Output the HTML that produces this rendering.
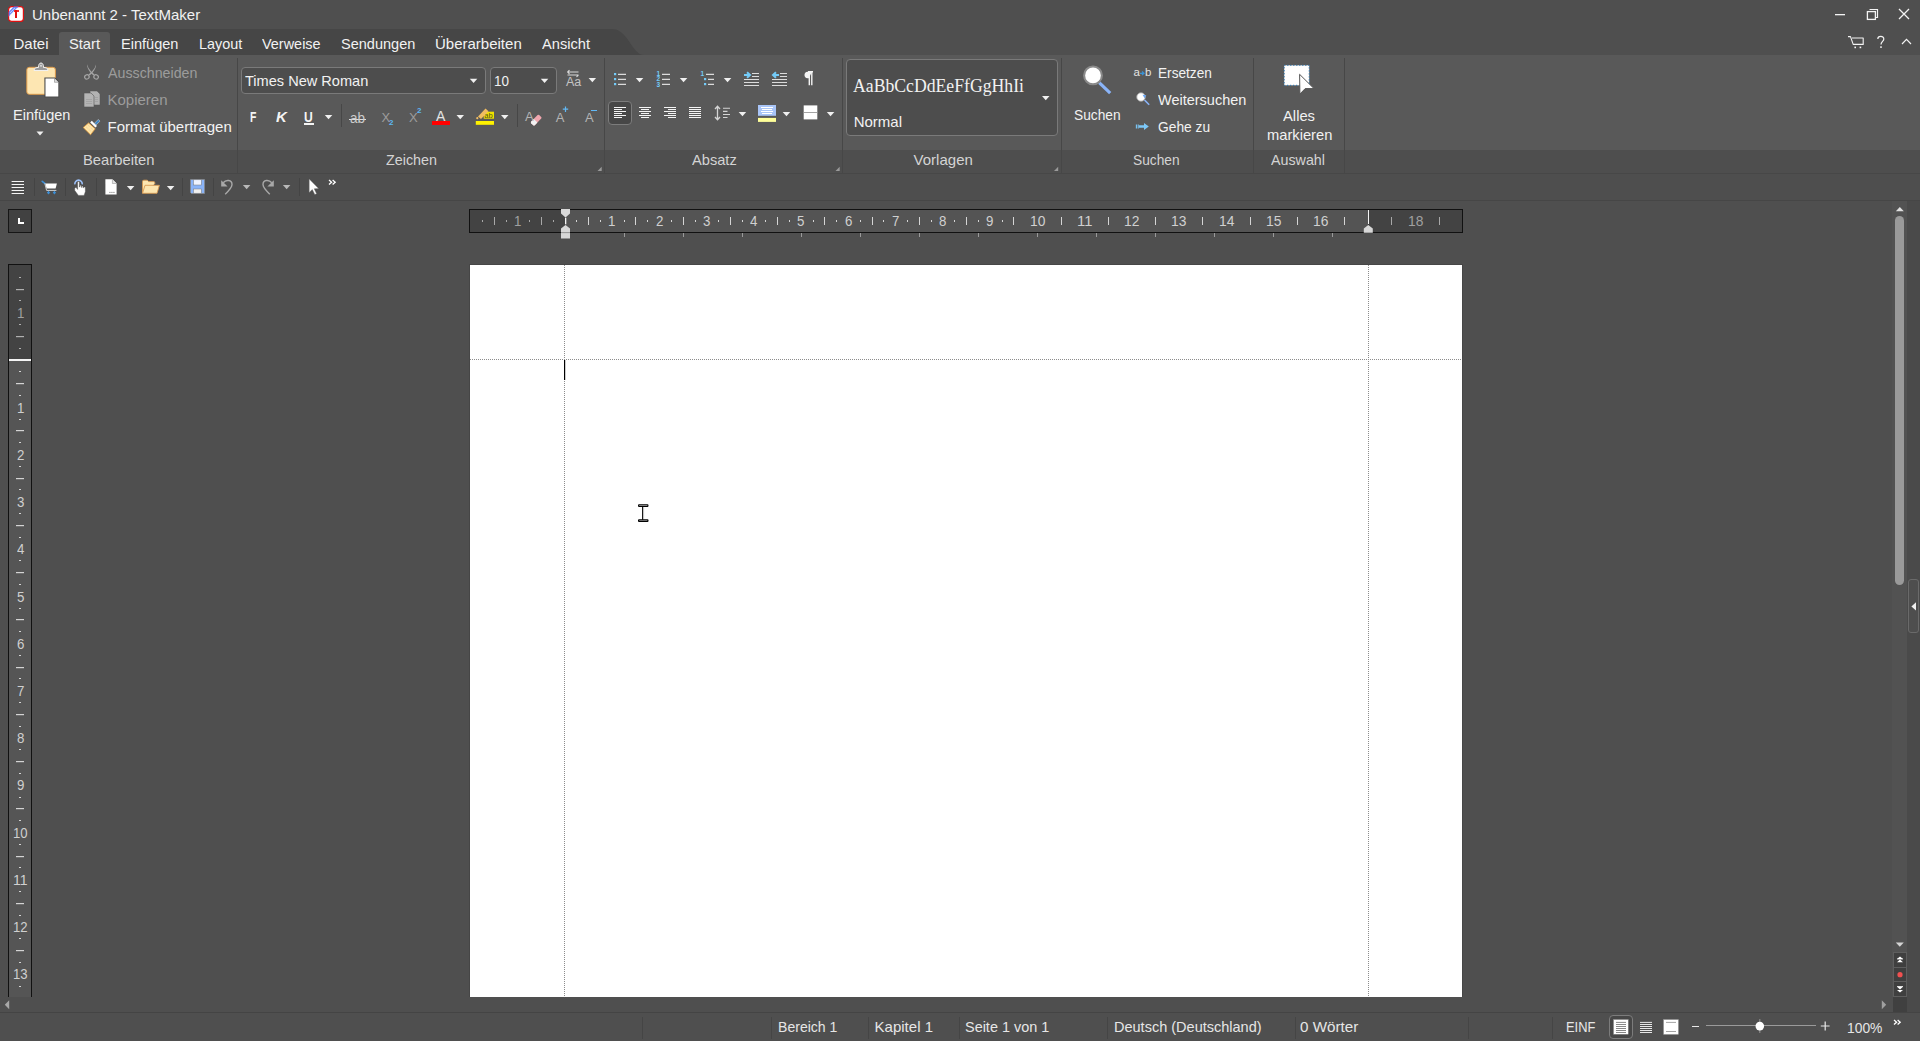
<!DOCTYPE html>
<html><head><meta charset="utf-8"><style>
html,body{margin:0;padding:0;width:1920px;height:1041px;overflow:hidden;background:#4f4f4f;font-family:'Liberation Sans',sans-serif;}
svg{display:block;overflow:visible}
</style></head><body>
<div style="position:absolute;left:0px;top:0px;width:1920px;height:29px;background:#4f4f4f;"></div>
<div style="position:absolute;left:0px;top:29px;width:1920px;height:26px;background:#4f4f4f;"></div>
<svg style="position:absolute;left:0px;top:29px;" width="650" height="26" viewBox="0 0 650 26"><path d="M0 0 H612 C628 0 632 26 644 26 H0 Z" fill="#464646"/></svg>
<div style="position:absolute;left:59px;top:32px;width:51px;height:23px;background:#595959;border-radius:3px 3px 0 0"></div>
<div style="position:absolute;left:0px;top:55px;width:1920px;height:95px;background:#595959;"></div>
<div style="position:absolute;left:0px;top:150px;width:1920px;height:23px;background:#4e4e4e;"></div>
<div style="position:absolute;left:0px;top:173px;width:1920px;height:1px;background:#474747;"></div>
<div style="position:absolute;left:0px;top:174px;width:1920px;height:26px;background:#4e4e4e;"></div>
<div style="position:absolute;left:0px;top:200px;width:1920px;height:1px;background:#464646;"></div>
<div style="position:absolute;left:0px;top:201px;width:1920px;height:811px;background:#4f4f4f;"></div>
<div style="position:absolute;left:237px;top:58px;width:1px;height:115px;background:#474747;"></div>
<div style="position:absolute;left:604px;top:58px;width:1px;height:115px;background:#474747;"></div>
<div style="position:absolute;left:842px;top:58px;width:1px;height:115px;background:#474747;"></div>
<div style="position:absolute;left:1061px;top:58px;width:1px;height:115px;background:#474747;"></div>
<div style="position:absolute;left:1253px;top:58px;width:1px;height:115px;background:#474747;"></div>
<div style="position:absolute;left:1344px;top:58px;width:1px;height:115px;background:#474747;"></div>
<div style="position:absolute;left:0px;top:1012px;width:1920px;height:1px;background:#444444;"></div>
<div style="position:absolute;left:0px;top:1013px;width:1920px;height:28px;background:#4f4f4f;"></div>
<div style="position:absolute;left:642px;top:1017px;width:1px;height:22px;background:#454545;"></div>
<div style="position:absolute;left:771px;top:1017px;width:1px;height:22px;background:#454545;"></div>
<div style="position:absolute;left:868px;top:1017px;width:1px;height:22px;background:#454545;"></div>
<div style="position:absolute;left:959px;top:1017px;width:1px;height:22px;background:#454545;"></div>
<div style="position:absolute;left:1107px;top:1017px;width:1px;height:22px;background:#454545;"></div>
<div style="position:absolute;left:1295px;top:1017px;width:1px;height:22px;background:#454545;"></div>
<div style="position:absolute;left:1468px;top:1017px;width:1px;height:22px;background:#454545;"></div>
<div style="position:absolute;left:1552px;top:1017px;width:1px;height:22px;background:#454545;"></div>
<div style="position:absolute;left:469px;top:264px;width:994px;height:733px;background:#464646;"></div>
<div style="position:absolute;left:470px;top:265px;width:992px;height:732px;background:#ffffff;"></div>
<svg style="position:absolute;left:8px;top:6px;" width="16" height="16" viewBox="0 0 16 16"><rect x="0.6" y="0.6" width="14.8" height="14.8" rx="3" fill="#fff" stroke="#e01010" stroke-width="1.2"/>
<path d="M5.9 0.6 L10.7 0.6 L0.6 10.7 L0.6 5.9 Z" fill="#5b7cf8"/>
<path d="M6.5 1.8 L7.5 1.8 L1.8 7.5 L1.8 6.5 Z M8.8 1.8 L9.4 1.8 L1.8 9.4 L1.8 8.8Z" fill="#dfe6ff"/>
<rect x="6" y="4" width="5" height="2" fill="#f03030"/><rect x="7" y="4" width="2" height="8" fill="#e01010"/></svg>
<svg style="position:absolute;left:1834px;top:8px;" width="80" height="12" viewBox="0 0 80 12"><rect x="1" y="6" width="10" height="1.3" fill="#f4f4f4"/>
<path d="M35.5 1.5 H43.5 V9.5 H41.5" fill="none" stroke="#f4f4f4" stroke-width="1.2"/>
<rect x="33.4" y="3.6" width="8" height="7.8" fill="none" stroke="#f4f4f4" stroke-width="1.3"/>
<path d="M65 1 L75 11 M75 1 L65 11" stroke="#f4f4f4" stroke-width="1.3"/></svg>
<svg style="position:absolute;left:1846px;top:34px;" width="68" height="16" viewBox="0 0 68 16"><path d="M2 2.6 H4.5 L7.2 10.4 H17.2 V4 H6" fill="none" stroke="#f4f4f4" stroke-width="1.1" stroke-linejoin="round"/>
<rect x="8.4" y="12.6" width="1.6" height="1.6" fill="#f4f4f4"/><rect x="13.6" y="12.6" width="1.6" height="1.6" fill="#f4f4f4"/>
<path d="M31.8 5 C31.8 1.5 37.8 1.4 37.8 5 C37.8 7.4 35 7.4 35 10.6" fill="none" stroke="#f4f4f4" stroke-width="1.2"/>
<rect x="34.2" y="12.3" width="1.6" height="1.6" fill="#f4f4f4"/>
<path d="M56 10 L60.5 5.3 L65 10" fill="none" stroke="#f4f4f4" stroke-width="1.2"/></svg>
<svg style="position:absolute;left:20px;top:58px;" width="44" height="44" viewBox="0 0 44 44"><rect x="6.8" y="9.3" width="28.6" height="27" rx="2.5" fill="#fde6b2" stroke="#dd9a4a" stroke-width="1"/>
<path d="M14 12.5 Q14 9.5 17 9.5 H18.5 Q18.5 5 21 5 Q23.5 5 23.5 9.5 H25 Q28 9.5 28 12.5 Z" fill="#9a9a9a" stroke="#f0f0f0" stroke-width="1"/>
<circle cx="21" cy="7.8" r="0.9" fill="#e8e8e8"/>
<path d="M24.4 19.4 H35.2 L39.2 23.4 V39.4 H24.4 Z" fill="#4c4c4c"/>
<path d="M25.5 20.5 H34.5 L38.3 24.3 V38.5 H25.5 Z" fill="#ffffff"/>
<path d="M34.5 20.5 V24.3 H38.3" fill="#dcdcdc" stroke="#8a8a8a" stroke-width="0.6"/></svg>
<svg style="position:absolute;left:80px;top:60px;" width="24" height="24" viewBox="0 0 24 24"><path d="M7.2 4.2 Q7.6 7.6 11.2 11.4 L14.6 14.6 L13.4 15.6 L10.4 12.4 Q6.8 8.2 7.2 4.2 Z" fill="#a4a4a4"/>
<path d="M15.9 4.5 Q15.5 7.8 11.9 11.4 L8.5 14.6 L9.7 15.6 L12.7 12.4 Q16.3 8.3 15.9 4.5 Z" fill="#a4a4a4"/>
<ellipse cx="6.9" cy="16.9" rx="2.3" ry="2.1" fill="none" stroke="#a4a4a4" stroke-width="1.2" transform="rotate(-35 6.9 16.9)"/>
<ellipse cx="16.1" cy="16.9" rx="2.3" ry="2.1" fill="none" stroke="#a4a4a4" stroke-width="1.2" transform="rotate(35 16.1 16.9)"/></svg>
<svg style="position:absolute;left:80px;top:88px;" width="24" height="24" viewBox="0 0 24 24"><path d="M10 3 H17 L20 6 V17 H10 Z" fill="#b2b2b2" stroke="#555" stroke-width="0.5"/>
<path d="M4 5 H11 L14 8 V19 H4 Z" fill="#b4b4b4" stroke="#555" stroke-width="0.6"/>
<path d="M6 11.5 H12 M6 13.5 H12 M6 15.5 H12 M14.5 9.5 H18 M14.5 11.5 H18 M14.5 13.5 H18" stroke="#999" stroke-width="0.6"/></svg>
<svg style="position:absolute;left:80px;top:114px;" width="24" height="24" viewBox="0 0 24 24"><path d="M14.5 9.2 L18.3 5.4 L20 7.1 L16.2 10.9 Z" fill="#3f86c6" stroke="#d8d8d8" stroke-width="0.5"/>
<path d="M10.2 8.4 L11.8 6.8 L17 12 L15.4 13.6 Z" fill="#ffffff"/>
<path d="M3.2 13.5 L8.6 8.9 L15.2 14.8 L10.5 20.8 Z" fill="#fde4a8" stroke="#e29a3c" stroke-width="0.8" stroke-linejoin="round"/>
<path d="M6 12.8 L11.5 17.8 M8 11.2 L13.3 16" stroke="#e8b872" stroke-width="0.5" stroke-dasharray="1 1"/></svg>
<svg style="position:absolute;left:36px;top:131px;" width="9" height="5" viewBox="0 0 9 5"><path d="M0.5 0.5 H7.5 L4 4.5 Z" fill="#f0f0f0"/></svg>
<div style="position:absolute;left:241px;top:67px;width:245px;height:27px;background:#4d4d4d;border:1px solid #7a7a7a;border-radius:4px;box-sizing:border-box"></div>
<div style="position:absolute;left:490px;top:67px;width:67px;height:27px;background:#4d4d4d;border:1px solid #7a7a7a;border-radius:4px;box-sizing:border-box"></div>
<svg style="position:absolute;left:469px;top:78px;" width="9" height="6" viewBox="0 0 9 6"><path d="M0.80 0.80 h7.5 l-3.75 4.3 Z" fill="#f0f0f0"/></svg>
<svg style="position:absolute;left:540px;top:78px;" width="9" height="6" viewBox="0 0 9 6"><path d="M0.80 0.80 h7.5 l-3.75 4.3 Z" fill="#f0f0f0"/></svg>
<svg style="position:absolute;left:564px;top:69px;" width="18" height="19" viewBox="0 0 18 19"><path d="M3.5 3 H14.5 M3.5 3 L5.5 1.2 M3.5 3 L5.5 4.8 M3.5 6 H14.5 M14.5 6 L12.5 7.8" fill="none" stroke="#d8d8d8" stroke-width="1.1"/>
<text x="2" y="17.4" font-family="Liberation Sans" font-size="12.5" fill="#c4c4c4">Aa</text></svg>
<svg style="position:absolute;left:588px;top:78px;" width="9" height="6" viewBox="0 0 9 6"><path d="M0.60 0.00 h7.5 l-3.75 4.3 Z" fill="#f0f0f0"/></svg>
<div style="position:absolute;left:304px;top:123px;width:10px;height:1.6px;background:#f4f4f4;"></div>
<svg style="position:absolute;left:324px;top:115px;" width="9" height="6" viewBox="0 0 9 6"><path d="M0.80 0.00 h7.5 l-3.75 4.3 Z" fill="#f0f0f0"/></svg>
<div style="position:absolute;left:341px;top:104px;width:1px;height:23px;background:#474747;"></div>
<div style="position:absolute;left:348.5px;top:119px;width:17px;height:1.2px;background:#dedede;"></div>
<div style="position:absolute;left:431.7px;top:121px;width:18.3px;height:3.8px;background:#ff0000;"></div>
<svg style="position:absolute;left:456px;top:115px;" width="9" height="6" viewBox="0 0 9 6"><path d="M0.50 0.00 h7.5 l-3.75 4.3 Z" fill="#f0f0f0"/></svg>
<svg style="position:absolute;left:474px;top:106px;" width="22" height="20" viewBox="0 0 22 20"><rect x="1.8" y="15" width="18.2" height="3.8" fill="#fff200"/>
<rect x="9.7" y="5.7" width="10.3" height="7" fill="#f0e000"/>
<text x="10.3" y="11.8" font-family="Liberation Sans" font-size="7.5" fill="#505020">ab</text>
<path d="M4 10.5 L11.5 2.5 L14.5 5.2 L7 13 Z" fill="#f0bc60"/>
<circle cx="3.3" cy="12.2" r="1.1" fill="#f0bc60"/></svg>
<svg style="position:absolute;left:501px;top:115px;" width="9" height="6" viewBox="0 0 9 6"><path d="M0.00 0.00 h7.5 l-3.75 4.3 Z" fill="#f0f0f0"/></svg>
<div style="position:absolute;left:517px;top:104px;width:1px;height:23px;background:#474747;"></div>
<svg style="position:absolute;left:529px;top:112px;" width="14" height="14" viewBox="0 0 14 14"><path d="M2.2 9.6 L8.6 3 Q9.4 2.3 10.2 3 L12.2 5 Q12.9 5.8 12.2 6.6 L5.8 13.2 Q5 13.9 4.2 13.2 L2.2 11.2 Q1.5 10.4 2.2 9.6 Z" fill="#f0a6ae"/><path d="M2.2 9.6 L4.8 6.9 L8.4 10.5 L5.8 13.2 Q5 13.9 4.2 13.2 L2.2 11.2 Q1.5 10.4 2.2 9.6 Z" fill="#f2f2f2"/></svg>
<svg style="position:absolute;left:562px;top:106px;" width="8" height="7" viewBox="0 0 8 7"><path d="M3.5 0.5 V6 M0.8 3.2 H6.2" stroke="#62b8f4" stroke-width="1.2"/></svg>
<div style="position:absolute;left:591px;top:110px;width:6px;height:1.2px;background:#62b8f4;"></div>
<svg style="position:absolute;left:612px;top:70px;" width="20" height="18" viewBox="0 0 20 18"><rect x="2" y="3" width="2.2" height="2.2" fill="#74cbf8"/><rect x="2" y="8" width="2.2" height="2.2" fill="#74cbf8"/><rect x="2" y="13" width="2.2" height="2.2" fill="#74cbf8"/>
<path d="M6 4.4 H14 M6 9.4 H14 M6 14.4 H14" stroke="#dcdcdc" stroke-width="1.1"/></svg>
<svg style="position:absolute;left:635px;top:77px;" width="9" height="6" viewBox="0 0 9 6"><path d="M0.80 0.90 h7.5 l-3.75 4.3 Z" fill="#f0f0f0"/></svg>
<svg style="position:absolute;left:655px;top:69px;" width="20" height="20" viewBox="0 0 20 20"><text x="1.5" y="7" font-family="Liberation Sans" font-weight="bold" font-size="6.5" fill="#74cbf8">1</text>
<text x="1.5" y="12" font-family="Liberation Sans" font-weight="bold" font-size="6.5" fill="#74cbf8">2</text>
<text x="1.5" y="17.5" font-family="Liberation Sans" font-weight="bold" font-size="6.5" fill="#74cbf8">3</text>
<path d="M7 5.4 H15 M7 10.4 H15 M7 15.4 H15" stroke="#dcdcdc" stroke-width="1.1"/></svg>
<svg style="position:absolute;left:679px;top:77px;" width="9" height="6" viewBox="0 0 9 6"><path d="M0.80 0.90 h7.5 l-3.75 4.3 Z" fill="#f0f0f0"/></svg>
<svg style="position:absolute;left:699px;top:69px;" width="20" height="20" viewBox="0 0 20 20"><text x="1.5" y="7" font-family="Liberation Sans" font-weight="bold" font-size="6.5" fill="#74cbf8">1</text>
<rect x="5" y="9" width="2.2" height="2.2" fill="#74cbf8"/><rect x="5" y="14" width="2.2" height="2.2" fill="#74cbf8"/>
<path d="M7 5.4 H15 M9 10.4 H15 M9 15.4 H15" stroke="#dcdcdc" stroke-width="1.1"/></svg>
<svg style="position:absolute;left:723px;top:77px;" width="9" height="6" viewBox="0 0 9 6"><path d="M0.80 0.90 h7.5 l-3.75 4.3 Z" fill="#f0f0f0"/></svg>
<svg style="position:absolute;left:742px;top:70px;" width="20" height="18" viewBox="0 0 20 18"><path d="M2 5 H6.5 M5 2.2 L8 5 L5 7.8" fill="none" stroke="#74cbf8" stroke-width="2" stroke-linejoin="miter"/>
<path d="M10 3.5 H17 M10 6.5 H17 M2 9.5 H17 M2 12.5 H17 M2 15.5 H17" stroke="#dcdcdc" stroke-width="1.1"/></svg>
<svg style="position:absolute;left:770px;top:70px;" width="20" height="18" viewBox="0 0 20 18"><path d="M9 5 H4.5 M6 2.2 L3 5 L6 7.8" fill="none" stroke="#74cbf8" stroke-width="2"/>
<path d="M10 3.5 H17 M10 6.5 H17 M2 9.5 H17 M2 12.5 H17 M2 15.5 H17" stroke="#dcdcdc" stroke-width="1.1"/></svg>
<svg style="position:absolute;left:802px;top:70px;" width="14" height="17" viewBox="0 0 14 17"><path d="M10 1.8 H5.5 C1.5 1.8 1.5 8.3 5.5 8.3 H6.8" fill="#f4f4f4"/>
<path d="M7.3 1.8 V15.2 M9.8 1.8 V15.2 M6 1.8 H11" stroke="#f4f4f4" stroke-width="1.4"/></svg>
<div style="position:absolute;left:608px;top:101px;width:24px;height:24px;background:#474747;border:1px solid #7c7c7c;border-radius:4px;box-sizing:border-box"></div>
<svg style="position:absolute;left:614px;top:105px;" width="14" height="16" viewBox="0 0 14 16"><path d="M0 2.5 H12 M0 4.5 H8 M0 6.5 H12 M0 8.5 H8 M0 10.5 H12 M0 12.5 H8 " stroke="#f4f4f4" stroke-width="1.15"/></svg>
<svg style="position:absolute;left:639px;top:105px;" width="14" height="16" viewBox="0 0 14 16"><path d="M0 2.5 H12 M2 4.5 H10 M0 6.5 H12 M2 8.5 H10 M0 10.5 H12 M2 12.5 H10 " stroke="#f4f4f4" stroke-width="1.15"/></svg>
<svg style="position:absolute;left:664px;top:105px;" width="14" height="16" viewBox="0 0 14 16"><path d="M0 2.5 H12 M4 4.5 H12 M0 6.5 H12 M4 8.5 H12 M0 10.5 H12 M4 12.5 H12 " stroke="#f4f4f4" stroke-width="1.15"/></svg>
<svg style="position:absolute;left:689px;top:105px;" width="14" height="16" viewBox="0 0 14 16"><path d="M0 2.5 H12 M0 4.5 H12 M0 6.5 H12 M0 8.5 H12 M0 10.5 H12 M0 12.5 H12 " stroke="#f4f4f4" stroke-width="1.15"/></svg>
<svg style="position:absolute;left:713px;top:104px;" width="20" height="18" viewBox="0 0 20 18"><path d="M4.5 2.5 V15.5 M2 5 L4.5 2.2 L7 5 M2 13 L4.5 15.8 L7 13" fill="none" stroke="#d4d4d4" stroke-width="1.3"/>
<path d="M10 4.3 H17 M10 7.4 H14.5 M10 10.5 H17 M10 13.5 H14.5" stroke="#d4d4d4" stroke-width="1.1"/></svg>
<svg style="position:absolute;left:738px;top:112px;" width="9" height="6" viewBox="0 0 9 6"><path d="M0.70 0.00 h7.5 l-3.75 4.3 Z" fill="#f0f0f0"/></svg>
<svg style="position:absolute;left:757px;top:104px;" width="21" height="19" viewBox="0 0 21 19"><rect x="1" y="1" width="18" height="10.8" fill="#a9c5f8"/>
<path d="M4 3.5 H16 M5 5.5 H15 M4 7.5 H16 M5 9.5 H15" stroke="#ffffff" stroke-width="1"/>
<rect x="1" y="13.9" width="18" height="4" fill="#ffff99"/></svg>
<svg style="position:absolute;left:782px;top:112px;" width="9" height="6" viewBox="0 0 9 6"><path d="M0.70 0.00 h7.5 l-3.75 4.3 Z" fill="#f0f0f0"/></svg>
<svg style="position:absolute;left:803px;top:105px;" width="15" height="15" viewBox="0 0 15 15"><rect x="0.7" y="0.4" width="13.6" height="14" fill="#ffffff"/><rect x="0.7" y="7" width="13.6" height="0.9" fill="#9a9a9a"/></svg>
<svg style="position:absolute;left:826px;top:112px;" width="9" height="6" viewBox="0 0 9 6"><path d="M0.80 0.00 h7.5 l-3.75 4.3 Z" fill="#f0f0f0"/></svg>
<svg style="position:absolute;left:597px;top:166px;" width="6" height="6" viewBox="0 0 6 6"><path d="M0.5 5 L4.7 0.8 V5 Z" fill="#9a9a9a"/></svg>
<svg style="position:absolute;left:835px;top:166px;" width="6" height="6" viewBox="0 0 6 6"><path d="M0.5 5 L4.7 0.8 V5 Z" fill="#9a9a9a"/></svg>
<svg style="position:absolute;left:1054px;top:166px;" width="6" height="6" viewBox="0 0 6 6"><path d="M0.0 5 L4.2 0.8 V5 Z" fill="#9a9a9a"/></svg>
<div style="position:absolute;left:846px;top:59px;width:212px;height:77px;background:#4d4d4d;border:1px solid #7a7a7a;border-radius:4px;box-sizing:border-box"></div>
<svg style="position:absolute;left:1042px;top:96px;" width="9" height="6" viewBox="0 0 9 6"><path d="M0.00 0.00 h7.5 l-3.75 4.3 Z" fill="#f0f0f0"/></svg>
<svg style="position:absolute;left:1080px;top:62px;" width="34" height="34" viewBox="0 0 34 34"><path d="M19.2 20.6 L30.2 31.2" stroke="#8ab4f8" stroke-width="3.2" stroke-linecap="butt"/>
<circle cx="13" cy="13.4" r="8.9" fill="#ffffff" stroke="#8a8a8a" stroke-width="2.1"/></svg>
<svg style="position:absolute;left:1132px;top:64px;" width="22" height="14" viewBox="0 0 22 14"><text x="1.5" y="12" font-family="Liberation Sans" font-size="11.5" fill="#e4e4e4">a</text>
<text x="13" y="12" font-family="Liberation Sans" font-size="11.5" fill="#e4e4e4">b</text>
<path d="M8 9.3 H11.5 M10 7.5 L12 9.3 L10 11.1" fill="none" stroke="#3a92d4" stroke-width="1.3"/></svg>
<svg style="position:absolute;left:1134px;top:90px;" width="18" height="18" viewBox="0 0 18 18"><path d="M10.5 10 L15.2 14.8" stroke="#8ab4f8" stroke-width="1.6"/>
<circle cx="7" cy="7" r="4.3" fill="#ffffff" stroke="#9a9a9a" stroke-width="0.9"/>
<path d="M8.5 4.7 L12.3 5.3 L10.6 8.2 Z" fill="#6aa6f4"/></svg>
<svg style="position:absolute;left:1134px;top:120px;" width="18" height="13" viewBox="0 0 18 13"><path d="M2.4 4.6 V8.4 M4.2 4.6 V8.4" stroke="#7cc8f8" stroke-width="1.1"/>
<path d="M5 5.3 H10 V3 L14.8 6.5 L10 10 V7.7 H5 Z" fill="#7cc8f8"/></svg>
<svg style="position:absolute;left:1280px;top:62px;" width="38" height="36" viewBox="0 0 38 36"><rect x="4.2" y="3.3" width="25" height="20" fill="#ffffff" stroke="#2a78b6" stroke-width="1" stroke-dasharray="1.2 1.8"/>
<path d="M19.6 12.3 L19.9 32 L25.2 26.6 L34 26.6 Z" fill="#ffffff" stroke="#555555" stroke-width="1" stroke-linejoin="miter"/></svg>
<svg style="position:absolute;left:10px;top:180px;" width="16" height="16" viewBox="0 0 16 16"><path d="M1.6 1.5 H14 M1.6 4.5 H14 M1.6 7.5 H14 M1.6 10.5 H14 M1.6 13.5 H14" stroke="#f4f4f4" stroke-width="1.2"/></svg>
<div style="position:absolute;left:34px;top:178px;width:1px;height:18px;background:#444444;"></div>
<div style="position:absolute;left:65px;top:178px;width:1px;height:18px;background:#444444;"></div>
<div style="position:absolute;left:96px;top:178px;width:1px;height:18px;background:#444444;"></div>
<div style="position:absolute;left:182px;top:178px;width:1px;height:18px;background:#444444;"></div>
<div style="position:absolute;left:213px;top:178px;width:1px;height:18px;background:#444444;"></div>
<div style="position:absolute;left:299px;top:178px;width:1px;height:18px;background:#444444;"></div>
<svg style="position:absolute;left:40px;top:179px;" width="20" height="17" viewBox="0 0 20 17"><path d="M2.2 2.3 L4.8 4.4" stroke="#3d8fd6" stroke-width="1.6" stroke-linecap="round"/>
<path d="M5.2 4.6 H16.9 L15.6 9.6 H6.6 Z" fill="#ffffff"/>
<path d="M4.8 4.4 L6.6 11.4 H16.4" fill="none" stroke="#dcdcdc" stroke-width="0.9"/>
<path d="M8.5 12 V14.2 M7.2 13.2 L8.5 14.6 L9.8 13.2 M14.4 12 V14.2 M13.1 13.2 L14.4 14.6 L15.7 13.2" fill="none" stroke="#3d8fd6" stroke-width="1.1"/></svg>
<svg style="position:absolute;left:72px;top:177px;" width="16" height="20" viewBox="0 0 16 20"><path d="M2.9 7.4 A3.7 3.7 0 1 1 10.2 7.4" fill="none" stroke="#9cc0f8" stroke-width="1.6"/>
<path d="M5.6 4.8 Q6.5 4.2 7.4 4.8 V10 H7.9 V8.4 Q8.6 7.9 9.3 8.4 V10.4 H9.6 V9.2 Q10.3 8.7 11 9.2 V10.8 H11.3 V10.2 Q12.3 9.6 13.3 10.2 L13.4 14.6 L12.1 18.4 H6.4 L2.7 13.4 V11.2 Q3.4 10.2 4.2 10.6 L5.6 12.4 Z" fill="#ffffff" stroke="#4a4a4a" stroke-width="0.45"/></svg>
<svg style="position:absolute;left:104px;top:178px;" width="14" height="18" viewBox="0 0 14 18"><path d="M1.4 1.3 H8.4 L12.6 5.5 V16.6 H1.4 Z" fill="#ffffff"/>
<path d="M8.4 1.3 V5.5 H12.6" fill="#e4e4e4" stroke="#888" stroke-width="0.5"/>
<path d="M5.5 14.4 H6.4 M7.5 14.4 H8.4 M9.5 14.4 H10.4" stroke="#555" stroke-width="1"/></svg>
<svg style="position:absolute;left:126px;top:185px;" width="9" height="6" viewBox="0 0 9 6"><path d="M0.90 0.90 h7.5 l-3.75 4.3 Z" fill="#f0f0f0"/></svg>
<svg style="position:absolute;left:141px;top:179px;" width="20" height="16" viewBox="0 0 20 16"><path d="M1.5 14.2 V2.6 Q1.5 1.2 2.9 1.2 H6.3 L7.6 2.6 H12.6 Q13.8 2.6 13.8 3.8 V5" fill="#fde6b0" stroke="#d79a52" stroke-width="0.9"/>
<path d="M1.5 14.3 L4 6.3 H18.4 L16 14.3 Z" fill="#fde6b0" stroke="#d79a52" stroke-width="0.9" stroke-linejoin="round"/></svg>
<svg style="position:absolute;left:166px;top:185px;" width="9" height="6" viewBox="0 0 9 6"><path d="M0.90 0.90 h7.5 l-3.75 4.3 Z" fill="#f0f0f0"/></svg>
<svg style="position:absolute;left:189px;top:178px;" width="17" height="17" viewBox="0 0 17 17"><path d="M1.5 1.5 H15.5 V15.5 H2.5 L1.5 14.5 Z" fill="#8ab4f8" stroke="#8a8a8a" stroke-width="0.7"/>
<rect x="4.5" y="1.8" width="7.8" height="5.2" fill="#eef3ff" stroke="#777" stroke-width="0.5"/>
<rect x="4.5" y="11" width="7.8" height="4.2" fill="#f0f0f0" stroke="#777" stroke-width="0.5"/></svg>
<svg style="position:absolute;left:219px;top:178px;" width="17" height="18" viewBox="0 0 17 18"><path d="M4.2 4.8 C7 1.4 13 1.6 13 6.6 C13 9.5 10.2 12.5 6.2 16.2" fill="none" stroke="#a8a8a8" stroke-width="1.4"/>
<path d="M2.2 2.2 V8.6 H8.6 Z" fill="#a8a8a8"/></svg>
<svg style="position:absolute;left:242px;top:185px;" width="9" height="6" viewBox="0 0 9 6"><path d="M0.90 0.00 h7.5 l-3.75 4.3 Z" fill="#b8b8b8"/></svg>
<svg style="position:absolute;left:259px;top:178px;" width="17" height="18" viewBox="0 0 17 18"><path d="M12.8 4.8 C10 1.4 4 1.6 4 6.6 C4 9.5 6.8 12.5 10.8 16.2" fill="none" stroke="#a8a8a8" stroke-width="1.4"/>
<path d="M14.8 2.2 V8.6 H8.4 Z" fill="#a8a8a8"/></svg>
<svg style="position:absolute;left:282px;top:185px;" width="9" height="6" viewBox="0 0 9 6"><path d="M0.90 0.00 h7.5 l-3.75 4.3 Z" fill="#b8b8b8"/></svg>
<svg style="position:absolute;left:307px;top:178px;" width="14" height="18" viewBox="0 0 14 18"><path d="M2.2 1 V14.4 L5.3 11.6 L7.8 16.6 L9.6 15.8 L7.2 10.8 L11.6 10.6 Z" fill="#ffffff" stroke="#6a6a6a" stroke-width="0.4"/></svg>
<svg style="position:absolute;left:328px;top:179px;" width="10" height="8" viewBox="0 0 10 8"><path d="M1 1 L3.6 3.2 L1 5.6 M4.6 1 L7.2 3.2 L4.6 5.6" fill="none" stroke="#ffffff" stroke-width="1.3"/></svg>
<div style="position:absolute;left:469px;top:209px;width:994px;height:24px;background:#434343;border:1px solid #111111;box-sizing:border-box"></div>
<div style="position:absolute;left:565px;top:210px;width:803px;height:22px;background:#545454;"></div>
<svg style="position:absolute;left:469px;top:209px;" width="994" height="24" viewBox="0 0 994 24"><rect x="13" y="11" width="1" height="2" fill="#a8a8a8"/><rect x="25" y="8" width="1" height="8" fill="#a8a8a8"/><rect x="37" y="11" width="1" height="2" fill="#a8a8a8"/><rect x="60" y="11" width="1" height="2" fill="#a8a8a8"/><rect x="72" y="8" width="1" height="8" fill="#a8a8a8"/><rect x="84" y="11" width="1" height="2" fill="#a8a8a8"/><rect x="107" y="11" width="1" height="2" fill="#d4d4d4"/><rect x="119" y="8" width="1" height="8" fill="#d4d4d4"/><rect x="131" y="11" width="1" height="2" fill="#d4d4d4"/><rect x="155" y="11" width="1" height="2" fill="#d4d4d4"/><rect x="166" y="8" width="1" height="8" fill="#d4d4d4"/><rect x="178" y="11" width="1" height="2" fill="#d4d4d4"/><rect x="202" y="11" width="1" height="2" fill="#d4d4d4"/><rect x="214" y="8" width="1" height="8" fill="#d4d4d4"/><rect x="226" y="11" width="1" height="2" fill="#d4d4d4"/><rect x="249" y="11" width="1" height="2" fill="#d4d4d4"/><rect x="261" y="8" width="1" height="8" fill="#d4d4d4"/><rect x="273" y="11" width="1" height="2" fill="#d4d4d4"/><rect x="296" y="11" width="1" height="2" fill="#d4d4d4"/><rect x="308" y="8" width="1" height="8" fill="#d4d4d4"/><rect x="320" y="11" width="1" height="2" fill="#d4d4d4"/><rect x="344" y="11" width="1" height="2" fill="#d4d4d4"/><rect x="355" y="8" width="1" height="8" fill="#d4d4d4"/><rect x="367" y="11" width="1" height="2" fill="#d4d4d4"/><rect x="391" y="11" width="1" height="2" fill="#d4d4d4"/><rect x="403" y="8" width="1" height="8" fill="#d4d4d4"/><rect x="414" y="11" width="1" height="2" fill="#d4d4d4"/><rect x="438" y="11" width="1" height="2" fill="#d4d4d4"/><rect x="450" y="8" width="1" height="8" fill="#d4d4d4"/><rect x="462" y="11" width="1" height="2" fill="#d4d4d4"/><rect x="485" y="11" width="1" height="2" fill="#d4d4d4"/><rect x="497" y="8" width="1" height="8" fill="#d4d4d4"/><rect x="509" y="11" width="1" height="2" fill="#d4d4d4"/><rect x="533" y="11" width="1" height="2" fill="#d4d4d4"/><rect x="544" y="8" width="1" height="8" fill="#d4d4d4"/><rect x="592" y="8" width="1" height="8" fill="#d4d4d4"/><rect x="639" y="8" width="1" height="8" fill="#d4d4d4"/><rect x="686" y="8" width="1" height="8" fill="#d4d4d4"/><rect x="733" y="8" width="1" height="8" fill="#d4d4d4"/><rect x="781" y="8" width="1" height="8" fill="#d4d4d4"/><rect x="828" y="8" width="1" height="8" fill="#d4d4d4"/><rect x="875" y="8" width="1" height="8" fill="#d4d4d4"/><rect x="922" y="8" width="1" height="8" fill="#a8a8a8"/><rect x="970" y="8" width="1" height="8" fill="#a8a8a8"/></svg>
<svg style="position:absolute;left:565px;top:233px;" width="810" height="5" viewBox="0 0 810 5"><rect x="59" y="0" width="1" height="4" fill="#9a9a9a"/><rect x="118" y="0" width="1" height="4" fill="#9a9a9a"/><rect x="177" y="0" width="1" height="4" fill="#9a9a9a"/><rect x="236" y="0" width="1" height="4" fill="#9a9a9a"/><rect x="295" y="0" width="1" height="4" fill="#9a9a9a"/><rect x="354" y="0" width="1" height="4" fill="#9a9a9a"/><rect x="413" y="0" width="1" height="4" fill="#9a9a9a"/><rect x="472" y="0" width="1" height="4" fill="#9a9a9a"/><rect x="531" y="0" width="1" height="4" fill="#9a9a9a"/><rect x="590" y="0" width="1" height="4" fill="#9a9a9a"/><rect x="649" y="0" width="1" height="4" fill="#9a9a9a"/><rect x="708" y="0" width="1" height="4" fill="#9a9a9a"/><rect x="767" y="0" width="1" height="4" fill="#9a9a9a"/></svg>
<svg style="position:absolute;left:559px;top:208px;" width="14" height="32" viewBox="0 0 14 32"><path d="M2 1 H11 V5.5 L6.5 9.5 L2 5.5 Z" fill="#d8d8d8"/>
<rect x="6" y="9.8" width="1.3" height="6.5" fill="#f4f4f4"/>
<path d="M6.5 17 L11 20.4 V30.6 H2 V20.4 Z" fill="#d8d8d8"/>
<rect x="2" y="24.2" width="9" height="0.9" fill="#8a8a8a"/></svg>
<div style="position:absolute;left:1368px;top:210px;width:1.4px;height:14px;background:#f4f4f4;"></div>
<svg style="position:absolute;left:1363px;top:224px;" width="11" height="10" viewBox="0 0 11 10"><path d="M5.3 1 L9.8 4.6 V8.8 H0.8 V4.6 Z" fill="#d8d8d8"/></svg>
<div style="position:absolute;left:8px;top:209px;width:24px;height:24px;background:#414141;border:1px solid #161616;box-sizing:border-box"></div>
<div style="position:absolute;left:18px;top:218px;width:2px;height:6px;background:#ffffff;"></div>
<div style="position:absolute;left:18px;top:222px;width:6px;height:2px;background:#ffffff;"></div>
<div style="position:absolute;left:8px;top:264px;width:24px;height:734px;background:#555555;border:1px solid #111111;border-bottom:none;box-sizing:border-box"></div>
<div style="position:absolute;left:9px;top:265px;width:22px;height:95px;background:#434343;"></div>
<div style="position:absolute;left:9px;top:359px;width:22px;height:2px;background:#f4f4f4;"></div>
<svg style="position:absolute;left:8px;top:264px;" width="24" height="734" viewBox="0 0 24 734"><rect x="11" y="13" width="2" height="1" fill="#b0b0b0"/><rect x="8" y="25" width="8" height="1.2" fill="#b0b0b0"/><rect x="11" y="36" width="2" height="1" fill="#b0b0b0"/><rect x="11" y="60" width="2" height="1" fill="#b0b0b0"/><rect x="8" y="72" width="8" height="1.2" fill="#b0b0b0"/><rect x="11" y="84" width="2" height="1" fill="#b0b0b0"/><rect x="11" y="107" width="2" height="1" fill="#d4d4d4"/><rect x="8" y="119" width="8" height="1.2" fill="#d4d4d4"/><rect x="11" y="131" width="2" height="1" fill="#d4d4d4"/><rect x="11" y="155" width="2" height="1" fill="#d4d4d4"/><rect x="8" y="166" width="8" height="1.2" fill="#d4d4d4"/><rect x="11" y="178" width="2" height="1" fill="#d4d4d4"/><rect x="11" y="202" width="2" height="1" fill="#d4d4d4"/><rect x="8" y="214" width="8" height="1.2" fill="#d4d4d4"/><rect x="11" y="225" width="2" height="1" fill="#d4d4d4"/><rect x="11" y="249" width="2" height="1" fill="#d4d4d4"/><rect x="8" y="261" width="8" height="1.2" fill="#d4d4d4"/><rect x="11" y="273" width="2" height="1" fill="#d4d4d4"/><rect x="11" y="296" width="2" height="1" fill="#d4d4d4"/><rect x="8" y="308" width="8" height="1.2" fill="#d4d4d4"/><rect x="11" y="320" width="2" height="1" fill="#d4d4d4"/><rect x="11" y="344" width="2" height="1" fill="#d4d4d4"/><rect x="8" y="355" width="8" height="1.2" fill="#d4d4d4"/><rect x="11" y="367" width="2" height="1" fill="#d4d4d4"/><rect x="11" y="391" width="2" height="1" fill="#d4d4d4"/><rect x="8" y="403" width="8" height="1.2" fill="#d4d4d4"/><rect x="11" y="414" width="2" height="1" fill="#d4d4d4"/><rect x="11" y="438" width="2" height="1" fill="#d4d4d4"/><rect x="8" y="450" width="8" height="1.2" fill="#d4d4d4"/><rect x="11" y="462" width="2" height="1" fill="#d4d4d4"/><rect x="11" y="485" width="2" height="1" fill="#d4d4d4"/><rect x="8" y="497" width="8" height="1.2" fill="#d4d4d4"/><rect x="11" y="509" width="2" height="1" fill="#d4d4d4"/><rect x="11" y="533" width="2" height="1" fill="#d4d4d4"/><rect x="8" y="544" width="8" height="1.2" fill="#d4d4d4"/><rect x="11" y="556" width="2" height="1" fill="#d4d4d4"/><rect x="11" y="580" width="2" height="1" fill="#d4d4d4"/><rect x="8" y="592" width="8" height="1.2" fill="#d4d4d4"/><rect x="11" y="603" width="2" height="1" fill="#d4d4d4"/><rect x="11" y="627" width="2" height="1" fill="#d4d4d4"/><rect x="8" y="639" width="8" height="1.2" fill="#d4d4d4"/><rect x="11" y="651" width="2" height="1" fill="#d4d4d4"/><rect x="11" y="674" width="2" height="1" fill="#d4d4d4"/><rect x="8" y="686" width="8" height="1.2" fill="#d4d4d4"/><rect x="11" y="698" width="2" height="1" fill="#d4d4d4"/><rect x="11" y="722" width="2" height="1" fill="#d4d4d4"/></svg>
<svg style="position:absolute;left:470px;top:265px;" width="992" height="732" viewBox="0 0 992 732"><line x1="94.5" y1="0" x2="94.5" y2="732" stroke="#8c8c8c" stroke-width="1" stroke-dasharray="1 1"/>
<line x1="898.5" y1="0" x2="898.5" y2="732" stroke="#8c8c8c" stroke-width="1" stroke-dasharray="1 1"/>
<line x1="0" y1="94.5" x2="992" y2="94.5" stroke="#8c8c8c" stroke-width="1" stroke-dasharray="1 1"/>
<rect x="94" y="95" width="1.2" height="20" fill="#000000"/></svg>
<svg style="position:absolute;left:632px;top:500px;" width="22" height="26" viewBox="0 0 22 26"><rect x="6.6" y="4.7" width="9.3" height="1.7" fill="#ffffff" stroke="#000" stroke-width="1.1" rx="0.4"/>
<rect x="10.1" y="6.6" width="1.1" height="13.2" fill="#000"/>
<rect x="11.2" y="7.4" width="0.9" height="11.6" fill="#c4c4c4"/>
<rect x="6.6" y="19.9" width="9.3" height="1.6" fill="#d0d0d0" stroke="#000" stroke-width="1.2" rx="0.4"/></svg>
<div style="position:absolute;left:1892px;top:201px;width:15px;height:796px;background:#525252;"></div>
<div style="position:absolute;left:1907px;top:201px;width:13px;height:811px;background:#4a4a4a;"></div>
<svg style="position:absolute;left:1895px;top:205px;" width="10" height="8" viewBox="0 0 10 8"><path d="M0.8 6.2 H8.8 L4.8 2 Z" fill="#e0e0e0"/></svg>
<div style="position:absolute;left:1895px;top:216px;width:9px;height:369px;background:#9a9a9a;border-radius:4.5px"></div>
<svg style="position:absolute;left:1895px;top:941px;" width="10" height="8" viewBox="0 0 10 8"><path d="M0.8 1.5 H8.8 L4.8 5.7 Z" fill="#d4d4d4"/></svg>
<div style="position:absolute;left:1908px;top:579px;width:11px;height:54px;background:#4e4e4e;border:1px solid #6a6a6a;border-radius:3px;box-sizing:border-box"></div>
<svg style="position:absolute;left:1910px;top:601px;" width="8" height="11" viewBox="0 0 8 11"><path d="M6 1.2 V9.6 L1.4 5.4 Z" fill="#f0f0f0"/></svg>
<div style="position:absolute;left:1893px;top:952px;width:14px;height:45px;background:#3f3f3f;border:1px solid #5e5e5e;box-sizing:border-box"></div>
<div style="position:absolute;left:1893px;top:967px;width:14px;height:1px;background:#5e5e5e;"></div>
<div style="position:absolute;left:1893px;top:981px;width:14px;height:1px;background:#5e5e5e;"></div>
<svg style="position:absolute;left:1893px;top:952px;" width="14" height="45" viewBox="0 0 14 45"><path d="M4 7 L7 4.4 L10 7 Z M4 10.2 L7 7.6 L10 10.2 Z" fill="#ffffff"/>
<rect x="4" y="6.6" width="6" height="0.8" fill="#ffffff"/>
<circle cx="7" cy="22.7" r="2.6" fill="#f05050"/>
<path d="M4 34.8 L7 37.4 L10 34.8 Z M4 38 L7 40.6 L10 38 Z" fill="#ffffff"/>
<rect x="4" y="34.2" width="6" height="0.8" fill="#ffffff"/></svg>
<div style="position:absolute;left:0px;top:997px;width:1892px;height:15px;background:#4f4f4f;"></div>
<div style="position:absolute;left:1893px;top:997px;width:14px;height:15px;background:#404040;"></div>
<svg style="position:absolute;left:3px;top:999px;" width="8" height="12" viewBox="0 0 8 12"><path d="M6.2 1.2 V10.2 L1.8 5.7 Z" fill="#a8a8a8"/></svg>
<svg style="position:absolute;left:1880px;top:999px;" width="8" height="12" viewBox="0 0 8 12"><path d="M1.8 1.2 V10.2 L6.2 5.7 Z" fill="#a0a0a0"/></svg>
<div style="position:absolute;left:1609px;top:1015px;width:24px;height:24px;background:#474747;border:1px solid #7c7c7c;border-radius:4px;box-sizing:border-box"></div>
<svg style="position:absolute;left:1613px;top:1019px;" width="16" height="16" viewBox="0 0 16 16"><rect x="0.6" y="0.6" width="14.6" height="14.6" fill="#ffffff" stroke="#9a9a9a" stroke-width="0.4"/>
<path d="M3 3.4 H13 M3 5.5 H13 M3 7.5 H13 M3 9.5 H13 M3 11.5 H13 M3 13.5 H13" stroke="#7a7a7a" stroke-width="0.9"/></svg>
<svg style="position:absolute;left:1639px;top:1019px;" width="14" height="16" viewBox="0 0 14 16"><path d="M1 3.4 H13 M1 5.5 H13 M1 7.5 H13 M1 9.5 H13 M1 11.5 H13 M1 13.5 H13" stroke="#e8e8e8" stroke-width="1"/></svg>
<svg style="position:absolute;left:1663px;top:1019px;" width="16" height="16" viewBox="0 0 16 16"><rect x="0.6" y="0.6" width="14.8" height="14.8" fill="#ffffff" stroke="#9a9a9a" stroke-width="0.4"/>
<path d="M3 3.4 H13 M3 12.5 H13" stroke="#9a9a9a" stroke-width="0.9"/></svg>
<div style="position:absolute;left:1692px;top:1026px;width:7px;height:1.3px;background:#e8e8e8;"></div>
<div style="position:absolute;left:1706px;top:1025px;width:110px;height:1.2px;background:#9a9a9a;"></div>
<svg style="position:absolute;left:1754px;top:1018px;" width="12" height="16" viewBox="0 0 12 16"><rect x="5.2" y="1" width="1.2" height="14" fill="#8a8a8a"/><circle cx="5.8" cy="8.1" r="4.3" fill="#ffffff"/></svg>
<svg style="position:absolute;left:1820px;top:1020px;" width="12" height="12" viewBox="0 0 12 12"><path d="M5.2 1.5 V10.5 M0.8 6 H9.6" stroke="#e8e8e8" stroke-width="1.2"/></svg>
<svg style="position:absolute;left:1893px;top:1019px;" width="10" height="8" viewBox="0 0 10 8"><path d="M1 1 L3.6 3.2 L1 5.6 M4.6 1 L7.2 3.2 L4.6 5.6" fill="none" stroke="#ffffff" stroke-width="1.3"/></svg>
<div style="position:absolute;left:32px;top:7px;font-family:'Liberation Sans',sans-serif;font-size:15px;line-height:1;color:#f2f2f2;white-space:pre;">Unbenannt 2 - TextMaker</div>
<div style="position:absolute;left:13.5px;top:36px;font-family:'Liberation Sans',sans-serif;font-size:15px;line-height:1;color:#f2f2f2;white-space:pre;">Datei</div>
<div style="position:absolute;left:69px;top:36px;font-family:'Liberation Sans',sans-serif;font-size:15px;line-height:1;color:#f2f2f2;white-space:pre;transform:scaleX(0.9783);transform-origin:0 0;">Start</div>
<div style="position:absolute;left:120.6px;top:36px;font-family:'Liberation Sans',sans-serif;font-size:15px;line-height:1;color:#f2f2f2;white-space:pre;transform:scaleX(0.9693);transform-origin:0 0;">Einfügen</div>
<div style="position:absolute;left:198.75px;top:36px;font-family:'Liberation Sans',sans-serif;font-size:15px;line-height:1;color:#f2f2f2;white-space:pre;transform:scaleX(0.9601);transform-origin:0 0;">Layout</div>
<div style="position:absolute;left:262px;top:36px;font-family:'Liberation Sans',sans-serif;font-size:15px;line-height:1;color:#f2f2f2;white-space:pre;transform:scaleX(0.9626);transform-origin:0 0;">Verweise</div>
<div style="position:absolute;left:340.7px;top:36px;font-family:'Liberation Sans',sans-serif;font-size:15px;line-height:1;color:#f2f2f2;white-space:pre;transform:scaleX(0.9681);transform-origin:0 0;">Sendungen</div>
<div style="position:absolute;left:435px;top:36px;font-family:'Liberation Sans',sans-serif;font-size:15px;line-height:1;color:#f2f2f2;white-space:pre;">Überarbeiten</div>
<div style="position:absolute;left:542px;top:36px;font-family:'Liberation Sans',sans-serif;font-size:15px;line-height:1;color:#f2f2f2;white-space:pre;transform:scaleX(0.9755);transform-origin:0 0;">Ansicht</div>
<div style="position:absolute;left:12.6px;top:107px;font-family:'Liberation Sans',sans-serif;font-size:15px;line-height:1;color:#f2f2f2;white-space:pre;transform:scaleX(0.9693);transform-origin:0 0;">Einfügen</div>
<div style="position:absolute;left:107.5px;top:65px;font-family:'Liberation Sans',sans-serif;font-size:15px;line-height:1;color:#9c9c9c;white-space:pre;transform:scaleX(0.9487);transform-origin:0 0;">Ausschneiden</div>
<div style="position:absolute;left:107.5px;top:92px;font-family:'Liberation Sans',sans-serif;font-size:15px;line-height:1;color:#9c9c9c;white-space:pre;">Kopieren</div>
<div style="position:absolute;left:107.5px;top:119px;font-family:'Liberation Sans',sans-serif;font-size:15px;line-height:1;color:#f2f2f2;white-space:pre;">Format übertragen</div>
<div style="position:absolute;left:82.5px;top:152px;font-family:'Liberation Sans',sans-serif;font-size:15px;line-height:1;color:#d4d4d4;white-space:pre;transform:scaleX(0.9854);transform-origin:0 0;">Bearbeiten</div>
<div style="position:absolute;left:386.3px;top:152px;font-family:'Liberation Sans',sans-serif;font-size:15px;line-height:1;color:#d4d4d4;white-space:pre;transform:scaleX(0.9555);transform-origin:0 0;">Zeichen</div>
<div style="position:absolute;left:692px;top:152px;font-family:'Liberation Sans',sans-serif;font-size:15px;line-height:1;color:#d4d4d4;white-space:pre;transform:scaleX(0.9747);transform-origin:0 0;">Absatz</div>
<div style="position:absolute;left:913.6px;top:152px;font-family:'Liberation Sans',sans-serif;font-size:15px;line-height:1;color:#d4d4d4;white-space:pre;">Vorlagen</div>
<div style="position:absolute;left:1133.4px;top:152px;font-family:'Liberation Sans',sans-serif;font-size:15px;line-height:1;color:#d4d4d4;white-space:pre;transform:scaleX(0.9160);transform-origin:0 0;">Suchen</div>
<div style="position:absolute;left:1271.25px;top:152px;font-family:'Liberation Sans',sans-serif;font-size:15px;line-height:1;color:#d4d4d4;white-space:pre;transform:scaleX(0.9523);transform-origin:0 0;">Auswahl</div>
<div style="position:absolute;left:244.7px;top:73px;font-family:'Liberation Sans',sans-serif;font-size:15px;line-height:1;color:#f2f2f2;white-space:pre;transform:scaleX(0.9710);transform-origin:0 0;">Times New Roman</div>
<div style="position:absolute;left:494px;top:73px;font-family:'Liberation Sans',sans-serif;font-size:15px;line-height:1;color:#f2f2f2;white-space:pre;transform:scaleX(0.8989);transform-origin:0 0;">10</div>
<div style="position:absolute;left:853px;top:77px;font-family:'Liberation Serif',serif;font-size:18px;line-height:1;color:#f2f2f2;white-space:pre;transform:scaleX(0.9828);transform-origin:0 0;">AaBbCcDdEeFfGgHhIi</div>
<div style="position:absolute;left:853.7px;top:114px;font-family:'Liberation Sans',sans-serif;font-size:15px;line-height:1;color:#f2f2f2;white-space:pre;">Normal</div>
<div style="position:absolute;left:1074.4px;top:107px;font-family:'Liberation Sans',sans-serif;font-size:15px;line-height:1;color:#f2f2f2;white-space:pre;transform:scaleX(0.9160);transform-origin:0 0;">Suchen</div>
<div style="position:absolute;left:1158.4px;top:65px;font-family:'Liberation Sans',sans-serif;font-size:15px;line-height:1;color:#f2f2f2;white-space:pre;transform:scaleX(0.9104);transform-origin:0 0;">Ersetzen</div>
<div style="position:absolute;left:1158.4px;top:92px;font-family:'Liberation Sans',sans-serif;font-size:15px;line-height:1;color:#f2f2f2;white-space:pre;transform:scaleX(0.9657);transform-origin:0 0;">Weitersuchen</div>
<div style="position:absolute;left:1158.4px;top:119px;font-family:'Liberation Sans',sans-serif;font-size:15px;line-height:1;color:#f2f2f2;white-space:pre;transform:scaleX(0.9186);transform-origin:0 0;">Gehe zu</div>
<div style="position:absolute;left:1283px;top:108px;font-family:'Liberation Sans',sans-serif;font-size:15px;line-height:1;color:#f2f2f2;white-space:pre;transform:scaleX(0.9841);transform-origin:0 0;">Alles</div>
<div style="position:absolute;left:1266.6px;top:127px;font-family:'Liberation Sans',sans-serif;font-size:15px;line-height:1;color:#f2f2f2;white-space:pre;transform:scaleX(0.9792);transform-origin:0 0;">markieren</div>
<div style="position:absolute;left:777.6px;top:1019px;font-family:'Liberation Sans',sans-serif;font-size:15px;line-height:1;color:#e6e6e6;white-space:pre;transform:scaleX(0.9373);transform-origin:0 0;">Bereich 1</div>
<div style="position:absolute;left:874.6px;top:1019px;font-family:'Liberation Sans',sans-serif;font-size:15px;line-height:1;color:#e6e6e6;white-space:pre;">Kapitel 1</div>
<div style="position:absolute;left:965.2px;top:1019px;font-family:'Liberation Sans',sans-serif;font-size:15px;line-height:1;color:#e6e6e6;white-space:pre;transform:scaleX(0.9627);transform-origin:0 0;">Seite 1 von 1</div>
<div style="position:absolute;left:1113.7px;top:1019px;font-family:'Liberation Sans',sans-serif;font-size:15px;line-height:1;color:#e6e6e6;white-space:pre;transform:scaleX(0.9674);transform-origin:0 0;">Deutsch (Deutschland)</div>
<div style="position:absolute;left:1300px;top:1019px;font-family:'Liberation Sans',sans-serif;font-size:15px;line-height:1;color:#e6e6e6;white-space:pre;transform:scaleX(1.0136);transform-origin:0 0;">0 Wörter</div>
<div style="position:absolute;left:1565.6px;top:1019px;font-family:'Liberation Sans',sans-serif;font-size:15px;line-height:1;color:#e6e6e6;white-space:pre;transform:scaleX(0.8604);transform-origin:0 0;">EINF</div>
<div style="position:absolute;left:1847.4px;top:1020px;font-family:'Liberation Sans',sans-serif;font-size:15px;line-height:1;color:#e6e6e6;white-space:pre;transform:scaleX(0.9225);transform-origin:0 0;">100%</div>
<div style="position:absolute;left:249.8px;top:110px;font-family:'Liberation Sans',sans-serif;font-size:14px;line-height:1;color:#f4f4f4;white-space:pre;transform:scaleX(0.7474);transform-origin:0 0;font-weight:bold">F</div>
<div style="position:absolute;left:276px;top:110px;font-family:'Liberation Sans',sans-serif;font-size:14px;line-height:1;color:#f4f4f4;white-space:pre;transform:scaleX(1.0702);transform-origin:0 0;font-weight:bold;font-style:italic">K</div>
<div style="position:absolute;left:304.4px;top:110px;font-family:'Liberation Sans',sans-serif;font-size:14px;line-height:1;color:#f4f4f4;white-space:pre;transform:scaleX(0.8691);transform-origin:0 0;font-weight:bold">U</div>
<div style="position:absolute;left:350px;top:111px;font-family:'Liberation Sans',sans-serif;font-size:14px;line-height:1;color:#cccccc;white-space:pre;transform:scaleX(0.9629);transform-origin:0 0;">ab</div>
<div style="position:absolute;left:381.5px;top:111px;font-family:'Liberation Sans',sans-serif;font-size:13px;line-height:1;color:#9c9c9c;white-space:pre;">X</div>
<div style="position:absolute;left:389px;top:119px;font-family:'Liberation Sans',sans-serif;font-size:8px;line-height:1;color:#5cb8f4;white-space:pre;font-weight:bold">2</div>
<div style="position:absolute;left:409px;top:111px;font-family:'Liberation Sans',sans-serif;font-size:13px;line-height:1;color:#9c9c9c;white-space:pre;">X</div>
<div style="position:absolute;left:417px;top:107px;font-family:'Liberation Sans',sans-serif;font-size:8px;line-height:1;color:#5cb8f4;white-space:pre;font-weight:bold">2</div>
<div style="position:absolute;left:436px;top:109px;font-family:'Liberation Sans',sans-serif;font-size:14px;line-height:1;color:#e4e4e4;white-space:pre;">A</div>
<div style="position:absolute;left:525px;top:110px;font-family:'Liberation Sans',sans-serif;font-size:13px;line-height:1;color:#b4b4b4;white-space:pre;">A</div>
<div style="position:absolute;left:555.8px;top:111px;font-family:'Liberation Sans',sans-serif;font-size:13px;line-height:1;color:#b4b4b4;white-space:pre;">A</div>
<div style="position:absolute;left:585px;top:111px;font-family:'Liberation Sans',sans-serif;font-size:13px;line-height:1;color:#b4b4b4;white-space:pre;">A</div>
<div style="position:absolute;left:514.0px;top:213px;font-family:'Liberation Sans',sans-serif;font-size:15px;line-height:1;color:#a0a0a0;white-space:pre;transform:scaleX(0.8869);transform-origin:0 0;">1</div>
<div style="position:absolute;left:608.4px;top:213px;font-family:'Liberation Sans',sans-serif;font-size:15px;line-height:1;color:#d0d0d0;white-space:pre;transform:scaleX(0.8869);transform-origin:0 0;">1</div>
<div style="position:absolute;left:655.7px;top:213px;font-family:'Liberation Sans',sans-serif;font-size:15px;line-height:1;color:#d0d0d0;white-space:pre;transform:scaleX(0.8869);transform-origin:0 0;">2</div>
<div style="position:absolute;left:702.9px;top:213px;font-family:'Liberation Sans',sans-serif;font-size:15px;line-height:1;color:#d0d0d0;white-space:pre;transform:scaleX(0.8869);transform-origin:0 0;">3</div>
<div style="position:absolute;left:750.2px;top:213px;font-family:'Liberation Sans',sans-serif;font-size:15px;line-height:1;color:#d0d0d0;white-space:pre;transform:scaleX(0.8869);transform-origin:0 0;">4</div>
<div style="position:absolute;left:797.4px;top:213px;font-family:'Liberation Sans',sans-serif;font-size:15px;line-height:1;color:#d0d0d0;white-space:pre;transform:scaleX(0.8869);transform-origin:0 0;">5</div>
<div style="position:absolute;left:844.7px;top:213px;font-family:'Liberation Sans',sans-serif;font-size:15px;line-height:1;color:#d0d0d0;white-space:pre;transform:scaleX(0.8869);transform-origin:0 0;">6</div>
<div style="position:absolute;left:891.9px;top:213px;font-family:'Liberation Sans',sans-serif;font-size:15px;line-height:1;color:#d0d0d0;white-space:pre;transform:scaleX(0.8869);transform-origin:0 0;">7</div>
<div style="position:absolute;left:939.2px;top:213px;font-family:'Liberation Sans',sans-serif;font-size:15px;line-height:1;color:#d0d0d0;white-space:pre;transform:scaleX(0.8869);transform-origin:0 0;">8</div>
<div style="position:absolute;left:986.4px;top:213px;font-family:'Liberation Sans',sans-serif;font-size:15px;line-height:1;color:#d0d0d0;white-space:pre;transform:scaleX(0.8869);transform-origin:0 0;">9</div>
<div style="position:absolute;left:1029.6px;top:213px;font-family:'Liberation Sans',sans-serif;font-size:15px;line-height:1;color:#d0d0d0;white-space:pre;transform:scaleX(0.9228);transform-origin:0 0;">10</div>
<div style="position:absolute;left:1076.9px;top:213px;font-family:'Liberation Sans',sans-serif;font-size:15px;line-height:1;color:#d0d0d0;white-space:pre;transform:scaleX(0.9886);transform-origin:0 0;">11</div>
<div style="position:absolute;left:1124.1px;top:213px;font-family:'Liberation Sans',sans-serif;font-size:15px;line-height:1;color:#d0d0d0;white-space:pre;transform:scaleX(0.9228);transform-origin:0 0;">12</div>
<div style="position:absolute;left:1171.4px;top:213px;font-family:'Liberation Sans',sans-serif;font-size:15px;line-height:1;color:#d0d0d0;white-space:pre;transform:scaleX(0.9228);transform-origin:0 0;">13</div>
<div style="position:absolute;left:1218.6px;top:213px;font-family:'Liberation Sans',sans-serif;font-size:15px;line-height:1;color:#d0d0d0;white-space:pre;transform:scaleX(0.9228);transform-origin:0 0;">14</div>
<div style="position:absolute;left:1265.9px;top:213px;font-family:'Liberation Sans',sans-serif;font-size:15px;line-height:1;color:#d0d0d0;white-space:pre;transform:scaleX(0.9228);transform-origin:0 0;">15</div>
<div style="position:absolute;left:1313.1px;top:213px;font-family:'Liberation Sans',sans-serif;font-size:15px;line-height:1;color:#d0d0d0;white-space:pre;transform:scaleX(0.9228);transform-origin:0 0;">16</div>
<div style="position:absolute;left:1407.6px;top:213px;font-family:'Liberation Sans',sans-serif;font-size:15px;line-height:1;color:#a0a0a0;white-space:pre;transform:scaleX(0.9228);transform-origin:0 0;">18</div>
<div style="position:absolute;left:16.5px;top:400px;font-family:'Liberation Sans',sans-serif;font-size:15px;line-height:1;color:#d0d0d0;white-space:pre;transform:scaleX(0.8869);transform-origin:0 0;">1</div>
<div style="position:absolute;left:16.5px;top:447px;font-family:'Liberation Sans',sans-serif;font-size:15px;line-height:1;color:#d0d0d0;white-space:pre;transform:scaleX(0.8869);transform-origin:0 0;">2</div>
<div style="position:absolute;left:16.5px;top:494px;font-family:'Liberation Sans',sans-serif;font-size:15px;line-height:1;color:#d0d0d0;white-space:pre;transform:scaleX(0.8869);transform-origin:0 0;">3</div>
<div style="position:absolute;left:16.5px;top:541px;font-family:'Liberation Sans',sans-serif;font-size:15px;line-height:1;color:#d0d0d0;white-space:pre;transform:scaleX(0.8869);transform-origin:0 0;">4</div>
<div style="position:absolute;left:16.5px;top:589px;font-family:'Liberation Sans',sans-serif;font-size:15px;line-height:1;color:#d0d0d0;white-space:pre;transform:scaleX(0.8869);transform-origin:0 0;">5</div>
<div style="position:absolute;left:16.5px;top:636px;font-family:'Liberation Sans',sans-serif;font-size:15px;line-height:1;color:#d0d0d0;white-space:pre;transform:scaleX(0.8869);transform-origin:0 0;">6</div>
<div style="position:absolute;left:16.5px;top:683px;font-family:'Liberation Sans',sans-serif;font-size:15px;line-height:1;color:#d0d0d0;white-space:pre;transform:scaleX(0.8869);transform-origin:0 0;">7</div>
<div style="position:absolute;left:16.5px;top:730px;font-family:'Liberation Sans',sans-serif;font-size:15px;line-height:1;color:#d0d0d0;white-space:pre;transform:scaleX(0.8869);transform-origin:0 0;">8</div>
<div style="position:absolute;left:16.5px;top:777px;font-family:'Liberation Sans',sans-serif;font-size:15px;line-height:1;color:#d0d0d0;white-space:pre;transform:scaleX(0.8869);transform-origin:0 0;">9</div>
<div style="position:absolute;left:12.9px;top:825px;font-family:'Liberation Sans',sans-serif;font-size:15px;line-height:1;color:#d0d0d0;white-space:pre;transform:scaleX(0.8749);transform-origin:0 0;">10</div>
<div style="position:absolute;left:12.9px;top:872px;font-family:'Liberation Sans',sans-serif;font-size:15px;line-height:1;color:#d0d0d0;white-space:pre;transform:scaleX(0.9372);transform-origin:0 0;">11</div>
<div style="position:absolute;left:12.9px;top:919px;font-family:'Liberation Sans',sans-serif;font-size:15px;line-height:1;color:#d0d0d0;white-space:pre;transform:scaleX(0.8749);transform-origin:0 0;">12</div>
<div style="position:absolute;left:12.9px;top:966px;font-family:'Liberation Sans',sans-serif;font-size:15px;line-height:1;color:#d0d0d0;white-space:pre;transform:scaleX(0.8749);transform-origin:0 0;">13</div>
<div style="position:absolute;left:16.5px;top:305px;font-family:'Liberation Sans',sans-serif;font-size:15px;line-height:1;color:#a0a0a0;white-space:pre;transform:scaleX(0.8869);transform-origin:0 0;">1</div>
</body></html>
